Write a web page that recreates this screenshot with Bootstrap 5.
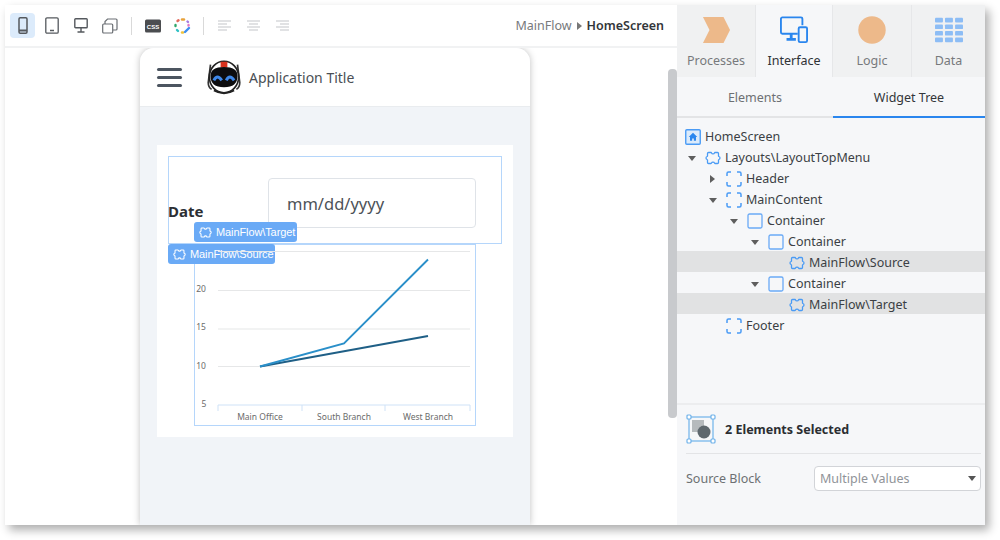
<!DOCTYPE html>
<html lang="en">
<head>
<meta charset="UTF-8">
<meta name="viewport" content="width=device-width, initial-scale=1.0">
<title>Widget Tree</title>
<link href="https://cdn.jsdelivr.net/npm/bootstrap@5.3.3/dist/css/bootstrap.min.css" rel="stylesheet">
<style>
html, body { height: 100%; background: #fff; overflow: hidden; }
body { font-family: "Noto Sans", sans-serif; font-size: 12.5px; color: #3b3f44; padding: 5px 15px 15px 5px; }
.app-win { width: 980px; height: 520px; box-shadow: 4px 5px 9px rgba(0,0,0,.32); background: #fff; }
.canvas-side { width: 672px; position: relative; }
.tool-bar { height: 43px; padding: 8px 13px 0 5px; border-bottom: 2px solid #f1f2f3; }
.tool-btn { width: 25px; height: 25px; margin-right: 4px; border-radius: 4px; }
.tool-btn.on { background: #dcebfb; }
.tool-sep { width: 1px; height: 18px; background: #d9d9d9; margin: 0 8px 0 5px; }
.crumb { font-size: 12.5px; color: #77797c; }
.crumb b { color: #33363a; font-weight: 600; }
.crumb i { display: inline-block; border-left: 5px solid #777; border-top: 4px solid transparent; border-bottom: 4px solid transparent; margin: 0 5px; }
.canvas-area { flex: 1; overflow: hidden; padding-left: 135px; }
.phone-frame { width: 390px; height: 100%; background: #f1f4f8; border-radius: 14px 14px 0 0; box-shadow: 0 0 7px rgba(0,0,0,.25); overflow: hidden; padding: 0; }
.phone-head { height: 59px; background: #fff; padding-left: 17px; border-bottom: 1px solid #e9ecef; }
.burger { width: 25px; }
.burger span { display: block; height: 3px; border-radius: 2px; background: #4c5560; margin-bottom: 5px; }
.burger span:last-child { margin-bottom: 0; }
.app-title { font-size: 14px; color: #4a4f55; margin-left: 7px; }
.page-card { background: #fff; margin: 38px 17px 0 17px; height: 292px; padding: 11px; position: relative; }
.target-box { height: 88px; width: 334px; border: 1px solid #b5d6fb; position: relative; }
.date-lbl { position: absolute; left: -1px; top: 43px; font-size: 15px; font-weight: 700; color: #2c2f33; }
.date-box { position: absolute; left: 99px; top: 21px; width: 208px; height: 50px; border: 1px solid #dfe3e8; border-radius: 4px; padding: 0 18px; font-size: 16.5px; line-height: 50px; color: #4d5257; }
.source-box { width: 282px; height: 182px; margin-left: 26px; border: 1px solid #b5d6fb; }
.wid-tag { position: absolute; height: 20px; background: #6aaaf6; color: #fff; border-radius: 3px; font: 11px "Liberation Sans", sans-serif; line-height: 20px; padding: 0 2px 0 5px; letter-spacing: -.1px; white-space: nowrap; }
.wid-tag svg { vertical-align: -3px; margin-right: 4px; }
.tag-target { left: 37px; top: 77px; }
.tag-source { left: 11px; top: 99px; }
.scroll-thumb { position: absolute; left: 663px; top: 64px; width: 9px; height: 349px; background: #c8cacd; border-radius: 4px; }
.side-panel { width: 308px; background: #f6f7f9; }
.main-tab { height: 72px; background: #f0f1f2; border-right: 1px solid #e6e7e9; text-align: center; color: #77797c; padding-top: 11px; }
.main-tab.on { background: #f6f7f9; color: #2f3236; }
.main-tab svg { display: block; margin: 0 auto 8px; }
.sub-tab { height: 41px; line-height: 42px; text-align: center; color: #6d7073; border-bottom: 2px solid #e3e4e6; }
.sub-tab.on { color: #33363a; border-bottom-color: #2a86ee; }
.tree-list { padding-top: 7px; flex: 1; }
.tree-row { height: 21px; padding-top: 3px; display: flex; align-items: center; white-space: nowrap; }
.tree-row.sel { background: #e1e2e3; }
.tree-row svg { flex: none; margin-right: 4px; }
.tw { width: 11px; flex: none; margin-right: 8px; display: flex; justify-content: center; }
.tw i { display: block; border-left: 4px solid transparent; border-right: 4px solid transparent; border-top: 5px solid #5e5e5e; }
.tw.closed i { border-top: 4px solid transparent; border-bottom: 4px solid transparent; border-left: 5px solid #5e5e5e; border-right: 0; }
.sel-panel { height: 122px; border-top: 2px solid #ecedef; padding: 0 4px 0 9px; }
.sel-head { height: 49px; border-bottom: 1px solid #e3e4e6; }
.sel-head b { font-weight: 700; color: #2b2e32; margin-left: 9px; padding-top: 2px; }
.src-row { margin-top: 12px; color: #6d7073; }
.src-row span { padding-top: 2px; }
.fake-select { width: 167px; height: 25px; line-height: 24px; background: #fff; border: 1px solid #d2d4d8; border-radius: 4px; padding-left: 5px; color: #909398; position: relative; }
.fake-select i { position: absolute; right: 4px; top: 9px; border-left: 4px solid transparent; border-right: 4px solid transparent; border-top: 5px solid #555; }
</style>
</head>
<body>
<svg width="0" height="0" class="position-absolute">
  <symbol id="blk" viewBox="0 0 16 16"><path d="M3.500 2.500H6c.4 0 .5.3.6.6.3 1 2.500 1 2.800 0 .1-.3.2-.6.6-.6h2.500a1 1 0 0 1 1 1V6c0 .3.2.4.5.5 1.300.4 1.300 2.600 0 3-.3.1-.5.2-.5.5v2.500a1 1 0 0 1-1 1H10c-.4 0-.5-.3-.6-.6-.3-1-2.500-1-2.800 0-.1.3-.2.6-.6.6H3.500a1 1 0 0 1-1-1V10c0-.3-.2-.4-.5-.5-1.300-.4-1.300-2.600 0-3 .3-.1.5-.2.5-.5V3.500a1 1 0 0 1 1-1z" fill="none" stroke="currentColor" stroke-width="1.300"/></symbol>
  <symbol id="ph" viewBox="0 0 16 16"><path d="M1 5V2.500A1.500 1.500 0 0 1 2.500 1H5M11 1h2.500A1.500 1.500 0 0 1 15 2.500V5M15 11v2.500a1.500 1.500 0 0 1-1.500 1.500H11M5 15H2.500A1.500 1.500 0 0 1 1 13.500V11" fill="none" stroke="#4a9bf5" stroke-width="1.500"/></symbol>
  <symbol id="box" viewBox="0 0 16 16"><rect x="1" y="1" width="14" height="14" rx="1.500" fill="none" stroke="#6aaaf6" stroke-width="1.300"/></symbol>
  <symbol id="algn" viewBox="0 0 14 12"><path d="M0 1h13M0 4h9M0 7h13M0 10h9" stroke="#c4c6c9" stroke-width="1.100"/></symbol>
  <symbol id="algc" viewBox="0 0 14 12"><path d="M0 1h13M2 4h9M0 7h13M2 10h9" stroke="#c4c6c9" stroke-width="1.100"/></symbol>
  <symbol id="algr" viewBox="0 0 14 12"><path d="M0 1h13M4 4h9M0 7h13M4 10h9" stroke="#c4c6c9" stroke-width="1.100"/></symbol>
</svg>

<div class="app-win d-flex">
  <div class="canvas-side d-flex flex-column">
    <div class="tool-bar d-flex align-items-start">
      <div class="tool-btn on d-flex align-items-center justify-content-center">
        <svg width="10" height="17" viewBox="0 0 10 17"><rect x="1" y=".8" width="8" height="15.400" rx="1.200" fill="none" stroke="#55595e" stroke-width="1.500"/><path d="M1 13.500h8" stroke="#55595e" stroke-width="2"/></svg>
      </div>
      <div class="tool-btn d-flex align-items-center justify-content-center">
        <svg width="14" height="17" viewBox="0 0 14 17"><rect x=".8" y=".8" width="12.400" height="15.400" rx="1.200" fill="none" stroke="#55595e" stroke-width="1.300"/><path d="M5 13.500h4" stroke="#55595e" stroke-width="1.500"/></svg>
      </div>
      <div class="tool-btn d-flex align-items-center justify-content-center">
        <svg width="14" height="15" viewBox="0 0 14 15"><rect x=".8" y=".8" width="12.400" height="9" rx=".8" fill="none" stroke="#55595e" stroke-width="1.400"/><path d="M7 10v4M3.500 14h7" stroke="#55595e" stroke-width="1.400"/></svg>
      </div>
      <div class="tool-btn d-flex align-items-center justify-content-center">
        <svg width="16" height="16" viewBox="0 0 16 16"><rect x=".7" y="6" width="10" height="9" rx="1" fill="none" stroke="#6b6f74" stroke-width="1.200"/><path d="M3 6V3.500L5.500 1H14a1 1 0 0 1 1 1v9a1 1 0 0 1-1 1h-3" fill="none" stroke="#6b6f74" stroke-width="1.200"/></svg>
      </div>
      <div class="tool-sep mt-1"></div>
      <div class="tool-btn d-flex align-items-center justify-content-center">
        <svg width="16" height="14" viewBox="0 0 16 14"><rect width="16" height="13" y=".5" rx="1.500" fill="#4b4d50"/><text x="8" y="9.500" font-family="Liberation Sans, sans-serif" font-size="6" font-weight="700" fill="#fff" text-anchor="middle">CSS</text></svg>
      </div>
      <div class="tool-btn d-flex align-items-center justify-content-center">
        <svg width="18" height="18" viewBox="0 0 18 18" fill="none" stroke-width="2.400" stroke-linecap="round"><path d="M9 2.500h2" stroke="#e8a23c"/><path d="M4.500 4l1-.8" stroke="#e26a5e"/><path d="M2.500 8v1" stroke="#2fa66a"/><path d="M4 13l1 1" stroke="#2fc0c4"/><path d="M14.500 4.500l.5.5" stroke="#a77be0"/><path d="M15.500 8v.5" stroke="#e178c8"/><path d="M9 15.500h1" stroke="#f2c33a"/><path d="M12 15l4-4" stroke="#3d8ff0"/></svg>
      </div>
      <div class="tool-sep mt-1" style="margin-left:5px"></div>
      <div class="tool-btn d-flex align-items-center justify-content-center"><svg width="14" height="12"><use href="#algn"/></svg></div>
      <div class="tool-btn d-flex align-items-center justify-content-center"><svg width="14" height="12"><use href="#algc"/></svg></div>
      <div class="tool-btn d-flex align-items-center justify-content-center"><svg width="14" height="12"><use href="#algr"/></svg></div>
      <div class="crumb ms-auto mt-1">MainFlow<i></i><b>HomeScreen</b></div>
    </div>
    <div class="canvas-area">
      <div class="phone-frame">
        <div class="phone-head d-flex align-items-center">
          <div class="burger"><span></span><span></span><span></span></div>
          <svg class="ms-4" width="36" height="36" viewBox="2 0 32 32">
            <path d="M6 5L4 21q0 4 3 6M30 5l2 16q0 4-3 6" fill="none" stroke="#333" stroke-width="1.500"/>
            <ellipse cx="18" cy="16" rx="13" ry="14" fill="#fff" stroke="#222" stroke-width="1.500"/>
            <path d="M15 2.500h6v5h-6z" fill="#d8321e"/>
            <path d="M6 15q0-8 12-8t12 8q0 10-12 10T6 15z" fill="#0d0d0f"/>
            <path d="M9 19q3-6 7 0M20 19q3-6 7 0" fill="none" stroke="#3f88e8" stroke-width="2.600"/>
            <path d="M9 28q9 5 18 0" fill="none" stroke="#222" stroke-width="1.500"/>
          </svg>
          <div class="app-title">Application Title</div>
        </div>
        <div class="page-card">
          <div class="target-box">
            <div class="date-lbl">Date</div>
            <div class="date-box">mm/dd/yyyy</div>
          </div>
          <div class="source-box"></div>
          <div class="wid-tag tag-target"><svg width="13" height="13" class="text-white"><use href="#blk"/></svg>MainFlow\Target</div>
          <div class="wid-tag tag-source"><svg width="13" height="13" class="text-white"><use href="#blk"/></svg>MainFlow\Source</div>
          <svg class="position-absolute top-0 start-0" width="355" height="292" viewBox="157 145 355 292" font-family="Noto Sans, sans-serif" font-size="8.500" fill="#6b6b6b">
            <path d="M218 251.500h252M218 290.500h252M218 329h252M218 366.500h252" stroke="#e6e7e8" stroke-width="1.200" fill="none"/>
            <path d="M218 411v-6h252v6M302 405v6M385 405v6" stroke="#cfe2f7" stroke-width="1" fill="none"/>
            <text x="201" y="292" text-anchor="middle">20</text>
            <text x="201" y="330" text-anchor="middle">15</text>
            <text x="201" y="369" text-anchor="middle">10</text>
            <text x="204" y="407" text-anchor="middle">5</text>
            <text x="260" y="420" text-anchor="middle">Main Office</text>
            <text x="344" y="420" text-anchor="middle">South Branch</text>
            <text x="428" y="420" text-anchor="middle">West Branch</text>
            <path d="M260 366.500L428 336" stroke="#1f5f86" stroke-width="1.900" fill="none"/>
            <path d="M260 366.500L344 343.500L428 259.500" stroke="#2a8fc9" stroke-width="1.900" fill="none"/>
          </svg>
        </div>
      </div>
    </div>
    <div class="scroll-thumb"></div>
  </div>

  <div class="side-panel d-flex flex-column">
    <div class="d-flex">
      <div class="main-tab" style="width:79px">
        <svg width="29" height="28" viewBox="0 0 29 30"><path d="M0 1h22l7 14-7 14H0l7-14z" fill="#edb98a"/></svg>Processes
      </div>
      <div class="main-tab on" style="width:77px">
        <svg width="30" height="28" viewBox="0 0 30 30" fill="none" stroke="#2a86ee" stroke-width="2"><path d="M19 19H2.500A1.500 1.500 0 0 1 1 17.500V3a1.500 1.500 0 0 1 1.500-1.500h20A1.500 1.500 0 0 1 24 3v7"/><path d="M12 19v5M7 25h10" stroke-width="3"/><rect x="20" y="12" width="9" height="16" rx="1.500"/></svg>Interface
      </div>
      <div class="main-tab" style="width:79px">
        <svg width="30" height="28" viewBox="0 0 30 30"><circle cx="15" cy="15" r="14.700" fill="#edb98a"/></svg>Logic
      </div>
      <div class="main-tab flex-grow-1 border-0">
        <svg width="30" height="28" viewBox="0 0 30 30" fill="#8dbdf5"><rect y="2" width="8.500" height="5" rx="1"/><rect x="10.700" y="2" width="8.500" height="5" rx="1"/><rect x="21.500" y="2" width="8.500" height="5" rx="1"/><rect y="9" width="8.500" height="5" rx="1"/><rect x="10.700" y="9" width="8.500" height="5" rx="1"/><rect x="21.500" y="9" width="8.500" height="5" rx="1"/><rect y="16" width="8.500" height="5" rx="1"/><rect x="10.700" y="16" width="8.500" height="5" rx="1"/><rect x="21.500" y="16" width="8.500" height="5" rx="1"/><rect y="23" width="8.500" height="5" rx="1"/><rect x="10.700" y="23" width="8.500" height="5" rx="1"/><rect x="21.500" y="23" width="8.500" height="5" rx="1"/></svg>Data
      </div>
    </div>
    <div class="d-flex">
      <div class="sub-tab" style="width:156px">Elements</div>
      <div class="sub-tab on flex-grow-1">Widget Tree</div>
    </div>
    <div class="tree-list">
      <div class="tree-row" style="padding-left:8px"><svg width="16" height="16" viewBox="0 0 15 15"><rect x=".7" y=".7" width="13.600" height="13.600" rx="1" fill="#dcebfb" stroke="#4a9bf5" stroke-width="1.300"/><path d="M7.500 3.500L3.500 7.500h1.200v3.500h2v-2h1.600v2h2V7.500h1.200z" fill="#2a86ee"/></svg>HomeScreen</div>
      <div class="tree-row" style="padding-left:9px"><span class="tw"><i></i></span><svg width="16" height="16" style="color:#4a9bf5"><use href="#blk"/></svg>Layouts\LayoutTopMenu</div>
      <div class="tree-row" style="padding-left:30px"><span class="tw closed"><i></i></span><svg width="16" height="16"><use href="#ph"/></svg>Header</div>
      <div class="tree-row" style="padding-left:30px"><span class="tw"><i></i></span><svg width="16" height="16"><use href="#ph"/></svg>MainContent</div>
      <div class="tree-row" style="padding-left:51px"><span class="tw"><i></i></span><svg width="16" height="16"><use href="#box"/></svg>Container</div>
      <div class="tree-row" style="padding-left:72px"><span class="tw"><i></i></span><svg width="16" height="16"><use href="#box"/></svg>Container</div>
      <div class="tree-row sel" style="padding-left:112px"><svg width="16" height="16" style="color:#4a9bf5"><use href="#blk"/></svg>MainFlow\Source</div>
      <div class="tree-row" style="padding-left:72px"><span class="tw"><i></i></span><svg width="16" height="16"><use href="#box"/></svg>Container</div>
      <div class="tree-row sel" style="padding-left:112px"><svg width="16" height="16" style="color:#4a9bf5"><use href="#blk"/></svg>MainFlow\Target</div>
      <div class="tree-row" style="padding-left:49px"><svg width="16" height="16"><use href="#ph"/></svg>Footer</div>
    </div>
    <div class="sel-panel">
      <div class="sel-head d-flex align-items-center">
        <svg width="30" height="30" viewBox="0 0 30 30"><rect x="3" y="3" width="24" height="24" fill="none" stroke="#6fb2ea" stroke-width="1.200"/><rect x="6" y="6" width="12" height="12" fill="#b6babd"/><circle cx="18" cy="18" r="6.500" fill="#5f686e"/><g fill="#fff" stroke="#6fb2ea" stroke-width="1.200"><rect x="1" y="1" width="4" height="4" rx="1"/><rect x="25" y="1" width="4" height="4" rx="1"/><rect x="1" y="25" width="4" height="4" rx="1"/><rect x="25" y="25" width="4" height="4" rx="1"/></g></svg>
        <b>2 Elements Selected</b>
      </div>
      <div class="src-row d-flex align-items-center justify-content-between">
        <span>Source Block</span>
        <div class="fake-select">Multiple Values<i></i></div>
      </div>
    </div>
  </div>
</div>
<script src="https://cdn.jsdelivr.net/npm/bootstrap@5.3.3/dist/js/bootstrap.bundle.min.js"></script>
</body>
</html>
